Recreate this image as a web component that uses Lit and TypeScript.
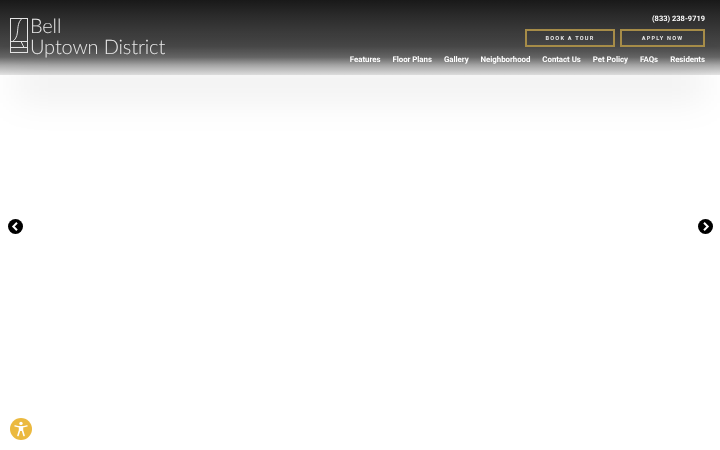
import { LitElement, html, css } from "lit";
import { customElement } from "lit/decorators.js";

const NAV = ["Features", "Floor Plans", "Gallery", "Neighborhood", "Contact Us", "Pet Policy", "FAQs", "Residents"];

@customElement("app-root")
export class AppRoot extends LitElement {
  static styles = css`
    :host { display: block; width: 720px; height: 450px; background: #fff; position: relative; overflow: hidden; font-family: Roboto, "Liberation Sans", sans-serif; text-rendering: geometricPrecision; }
    header { height: 75px; box-sizing: border-box; padding: 12px 15px 0 10px; display: flex; justify-content: space-between; position: relative;
      background: linear-gradient(180deg, #191919 0%, #2a2a2a 20%, #484848 62%, #666 76%, #aaa 87%, #e6e6e6 100%); }
    header::after { content: ""; position: absolute; left: 15px; right: 15px; top: 68px; height: 30px; background: rgba(0,0,0,.07); filter: blur(18px); z-index: 0; }
    .logo { display: flex; gap: 2px; margin-top: 6px; color: #e9e9e9; align-self: flex-start; position: relative; z-index: 1; will-change: opacity; }
    .logo svg { flex: none; }
    .name { font-family: Lato, sans-serif; font-weight: 300; font-size: 20px; line-height: 20.5px; white-space: nowrap; letter-spacing: -0.15px; margin-top: -2px; }
    .right { display: flex; flex-direction: column; align-items: flex-end; position: relative; z-index: 1; will-change: opacity; }
    .phone { color: #fff; font-weight: 700; font-size: 7.4px; line-height: 12px; letter-spacing: .05px; padding-top: 1px; }
    .btns { display: flex; gap: 5px; margin-top: 4px; }
    .btn { box-sizing: border-box; height: 18px; padding-top: 1px; border: 2px solid #a68c48; color: #e6e6e6; font-weight: 700; font-size: 5.6px; letter-spacing: 1.2px; display: flex; align-items: center; justify-content: center; }
    .b1 { width: 90px; }
    .b2 { width: 85px; }
    nav { display: flex; gap: 12px; margin-top: 8px; }
    nav a { color: #fff; font-weight: 700; font-size: 7.9px; line-height: 10px; letter-spacing: -.05px; white-space: nowrap; }
    .arrow { position: absolute; top: 219px; width: 15px; height: 15px; }
    .prev { left: 7.5px; }
    .next { right: 7.5px; }
    .a11y { position: absolute; left: 10px; top: 418px; width: 22px; height: 22px; }
  `;

  render() {
    return html`
      <header>
        <div class="logo">
          <svg width="18" height="36" viewBox="0 0 18 36" fill="none" stroke="#e4e4e4" stroke-width="1">
            <rect x=".5" y=".5" width="17" height="34"/>
            <path d="M.5 23.5H17.5M.5 29.5H17.5M12 .5C8 4 8 9 7.5 14C7 19 5 22 2.5 23.5M11 23.5L14 29.5"/>
          </svg>
          <div class="name"><div>Bell</div><div>Uptown District</div></div>
        </div>
        <div class="right">
          <div class="phone">(833) 238-9719</div>
          <div class="btns"><div class="btn b1">BOOK A TOUR</div><div class="btn b2">APPLY NOW</div></div>
          <nav>${NAV.map((n) => html`<a>${n}</a>`)}</nav>
        </div>
      </header>
      <svg class="arrow prev" viewBox="0 0 15 15"><circle cx="7.5" cy="7.5" r="7.5" fill="#000"/><path d="M9 3.8L5.3 7.5L9 11.2" fill="none" stroke="#fff" stroke-width="2"/></svg>
      <svg class="arrow next" viewBox="0 0 15 15"><circle cx="7.5" cy="7.5" r="7.5" fill="#000"/><path d="M6 3.8L9.7 7.5L6 11.2" fill="none" stroke="#fff" stroke-width="2"/></svg>
      <svg class="a11y" viewBox="0 0 22 22">
        <circle cx="11" cy="11" r="11" fill="#ebb93f"/>
        <circle cx="11" cy="5.4" r="1.7" fill="#fff"/>
        <path d="M5 7.9C7 8.6 9 9 11 9C13 9 15 8.6 17 7.9" fill="none" stroke="#fff" stroke-width="1.5" stroke-linecap="round"/>
        <path d="M9.6 9V12.3L8 17.4M12.4 9V12.3L14 17.4M9.6 12.3H12.4M11 9V12.3" fill="none" stroke="#fff" stroke-width="1.6" stroke-linecap="round" stroke-linejoin="round"/>
      </svg>
    `;
  }
}
